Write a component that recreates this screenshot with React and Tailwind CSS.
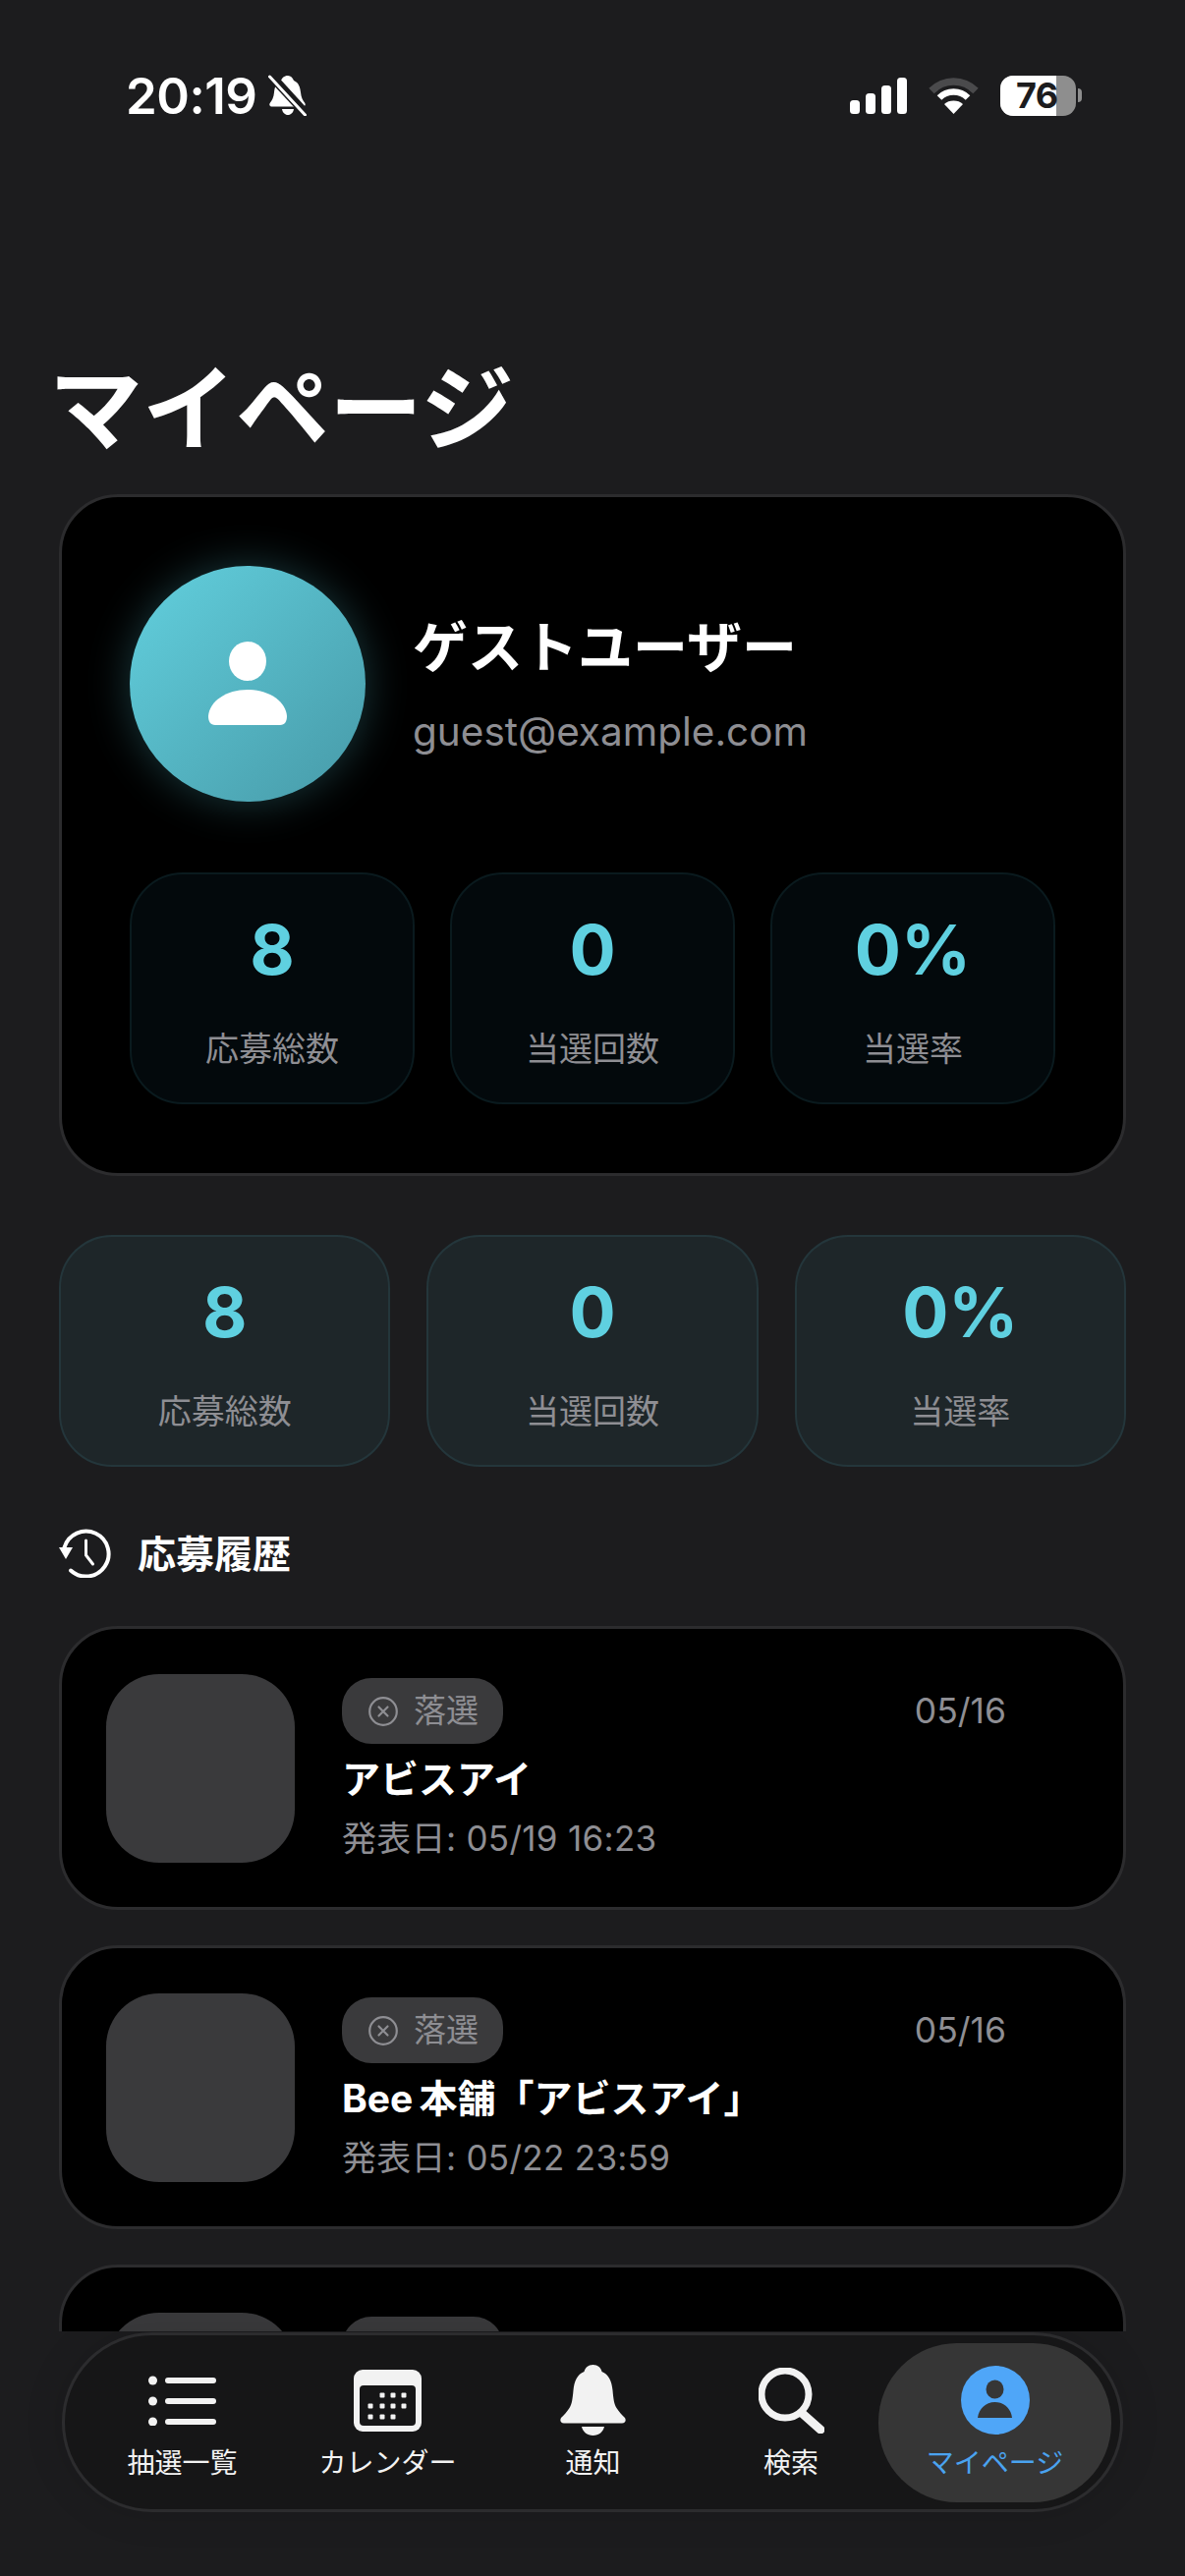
import React from 'react'

const STATS = [
  { value: '8', label: '応募総数' },
  { value: '0', label: '当選回数' },
  { value: '0%', label: '当選率' },
]

const HISTORY = [
  { title: 'アビスアイ', announce: '発表日: 05/19 16:23', date: '05/16' },
  { title: 'Bee\u2009本舗「アビスアイ」', announce: '発表日: 05/22 23:59', date: '05/16' },
  { title: 'アビスアイ', announce: '発表日: 05/23 12:00', date: '05/16' },
]

function StatusBar() {
  return (
    <div className="flex h-[194px] shrink-0 items-center justify-between pl-[128px] pr-[105px] text-white">
      <div className="flex items-center gap-[12px]">
        <span className="text-[51px] leading-none font-semibold tracking-[-0.5px]">20:19</span>
        <svg width="40" height="42" viewBox="0 0 40 42" fill="none">
          <path d="M20 1c3 0 5 2.500 6 5 5 2 6.500 7 7 12 .5 5 2 8 4 10.500 1.500 2 .5 4-2 4H4c-2.500 0-3.500-2-2-4 2-2.500 3.500-5.500 4-10.500.5-5 2-10 7-12 1-2.500 3-5 7-5z" fill="#fff" />
          <path d="M14 35h12c-.5 3.500-3 6-6 6s-5.500-2.500-6-6z" fill="#fff" />
          <path d="M2 1l36 39" stroke="#1c1c1e" strokeWidth="8" />
          <path d="M1.500 2l36 39" stroke="#fff" strokeWidth="3" strokeLinecap="round" />
          <path d="M8 1.500l32 35" stroke="#1c1c1e" strokeWidth="2" />
        </svg>
      </div>
      <div className="flex items-center">
        <svg width="58" height="37" viewBox="0 0 58 37" fill="#fff">
          <rect x="0" y="23" width="10" height="14" rx="3.500" />
          <rect x="16" y="16" width="10" height="21" rx="3.500" />
          <rect x="32" y="8" width="10" height="29" rx="3.500" />
          <rect x="48" y="0" width="10" height="37" rx="3.500" />
        </svg>
        <svg className="ml-[22px]" width="51" height="37" viewBox="0 0 51 37" fill="none">
          <path d="M3 13.500C9.500 7 17 4 25.500 4S41.500 7 48 13.500" stroke="#4a4a4c" strokeWidth="7.500" />
          <path d="M11 20.500c4-4 9-6 14.500-6s10.500 2 14.500 6" stroke="#fff" strokeWidth="6.500" />
          <path d="M25.500 37L16 27c2.500-2.500 5.800-3.500 9.500-3.500S32.500 24.500 35 27z" fill="#fff" />
        </svg>
        <div className="relative ml-[22px] flex h-[41px] w-[77px] items-center overflow-hidden rounded-[13px] bg-[#8e8e8e] pl-[16px]">
          <div className="absolute inset-y-0 left-0 w-[57px] bg-white" />
          <span className="relative text-[36px] leading-none font-bold tracking-[-0.5px] text-[#1c1c1e]">76</span>
        </div>
        <div className="ml-[2px] h-[14px] w-[4px] rounded-r-full bg-[#8e8e8e]" />
      </div>
    </div>
  )
}

function StatBox({ value, label, className }) {
  return (
    <div className={`flex h-[236px] flex-col items-center rounded-[54px] border-2 pt-[35px] ${className}`}>
      <span className="text-[70px] leading-[84px] font-bold text-[#5fd0e0]">{value}</span>
      <span className="mt-[35px] text-[34px] leading-[48px] text-[#8e8e93]">{label}</span>
    </div>
  )
}

function ProfileCard() {
  return (
    <div className="rounded-[60px] border-[3px] border-[#2c2c2e] bg-black px-[69px] pt-[70px] pb-[70px]">
      <div className="flex items-center">
        <div className="flex h-[240px] w-[240px] items-center justify-center rounded-full bg-gradient-to-br from-[#62d0de] to-[#479aa8] shadow-[0_0_44px_rgba(95,208,224,0.28)]">
          <svg width="80" height="86" viewBox="0 0 80 86" fill="#fff">
            <ellipse cx="40" cy="20" rx="19" ry="20" />
            <path d="M0 76C1 61 18 49 40 49s39 12 40 27c0 5-2 9-7 9H7c-5 0-7-4-7-9z" />
          </svg>
        </div>
        <div className="ml-[48px] flex flex-col">
          <span className="text-[56px] leading-[80px] font-bold text-white">ゲストユーザー</span>
          <span className="mt-[18px] text-[40.500px] leading-[56px] text-[#8e8e93]">guest@example.com</span>
        </div>
      </div>
      <div className="mt-[72px] grid grid-cols-3 gap-[36px]">
        {STATS.map(s => (
          <StatBox key={s.label} {...s} className="border-[#0a1a1e] bg-[#03090c]" />
        ))}
      </div>
    </div>
  )
}

function HistoryCard({ title, announce, date }) {
  return (
    <div className="flex h-[289px] shrink-0 items-start rounded-[60px] border-[3px] border-[#2c2c2e] bg-black pt-[46px] pl-[45px]">
      <div className="h-[192px] w-[192px] shrink-0 rounded-[54px] bg-[#3a3a3c]" />
      <div className="ml-[48px] flex w-[676px] flex-col pt-[4px]">
        <div className="flex items-center justify-between">
          <div className="flex h-[67px] items-center rounded-[30px] bg-[#3a3a3c] pl-[27px] pr-[25px]">
            <svg width="30" height="30" viewBox="0 0 30 30" fill="none" stroke="#8e8e93" strokeWidth="2.200" strokeLinecap="round">
              <circle cx="15" cy="15" r="13.800" />
              <path d="M10.500 10.500l9 9M19.500 10.500l-9 9" />
            </svg>
            <span className="ml-[16px] text-[33px] leading-none text-[#8e8e93]">落選</span>
          </div>
          <span className="text-[35.500px] leading-none text-[#8e8e93]">{date}</span>
        </div>
        <span className="mt-[8px] text-[39px] leading-[56px] font-bold text-white">{title}</span>
        <span className="mt-[7px] text-[35px] leading-[50px] tracking-[0.3px] text-[#8e8e93]">{announce}</span>
      </div>
    </div>
  )
}

function TabIcon({ name }) {
  if (name === 'list') {
    return (
      <svg width="69" height="51" viewBox="0 0 69 51" fill="#f2f2f2">
        <circle cx="4.500" cy="5" r="4.500" />
        <circle cx="4.500" cy="26" r="4.500" />
        <circle cx="4.500" cy="47" r="4.500" />
        <rect x="17" y="2" width="52" height="6" rx="3" />
        <rect x="17" y="23" width="52" height="6" rx="3" />
        <rect x="17" y="44" width="52" height="6" rx="3" />
      </svg>
    )
  }
  if (name === 'calendar') {
    const dots = [[29, 26], [40, 26], [51, 26], [17, 37], [29, 37], [40, 37], [51, 37], [17, 48], [29, 48], [40, 48]]
    return (
      <svg width="69" height="63" viewBox="0 0 69 63">
        <rect width="69" height="63" rx="9" fill="#f2f2f2" />
        <rect x="6" y="16" width="57" height="41" rx="4" fill="#161617" />
        {dots.map(([x, y]) => (
          <rect key={`${x}-${y}`} x={x - 2.5} y={y - 2.5} width="5" height="5" rx="1" fill="#f2f2f2" />
        ))}
      </svg>
    )
  }
  if (name === 'bell') {
    return (
      <svg width="67" height="72" viewBox="0 0 67 72" fill="#f2f2f2">
        <path d="M33.500 0c5 0 8 3 9 7 7 3 10 9 11 19 .8 9 1.500 14 4 18 2 3.500 5.500 7 8.500 10 1.500 2.500.5 5.500-3 5.500H4c-3.500 0-4.500-3-3-5.500 3-3 6.500-6.500 8.500-10 2.500-4 3.200-9 4-18 1-10 4-16 11-19 1-4 4-7 9-7z" />
        <path d="M22 63h23c-1 5-5.500 9-11.500 9S23 68 22 63z" />
      </svg>
    )
  }
  if (name === 'search') {
    return (
      <svg width="67" height="67" viewBox="0 0 67 67" fill="none" stroke="#f2f2f2" strokeLinecap="round">
        <circle cx="27" cy="27" r="24" strokeWidth="7" />
        <path d="M45 47l18 16" strokeWidth="9" />
      </svg>
    )
  }
  return (
    <svg width="70" height="70" viewBox="0 0 70 70">
      <circle cx="35" cy="35" r="35" fill="#4fa6f8" />
      <ellipse cx="34.500" cy="24" rx="9" ry="9.500" fill="#363636" />
      <path d="M17 53c1-9 8-16 17.500-16S51 44 52 53z" fill="#363636" />
    </svg>
  )
}

function TabItem({ icon, label, className = '', labelClass = 'text-[#f2f2f2]' }) {
  return (
    <div className={`flex flex-col items-center pt-[3px] ${className}`}>
      <div className="flex h-[72px] items-center justify-center">
        <TabIcon name={icon} />
      </div>
      <span className={`mt-[8px] text-[28px] leading-[40px] whitespace-nowrap ${labelClass}`}>{label}</span>
    </div>
  )
}

function TabBar() {
  return (
    <div className="flex flex-1 flex-col bg-[#1c1c1e] pt-[1px] pl-[63px]">
      <div className="flex h-[183px] w-[1080px] items-center rounded-[92px] border-[3px] border-[#2c2c2e] bg-[#161617] pl-[15px] shadow-[0_0_40px_rgba(0,0,0,0.12)]">
        <TabItem icon="list" label="抽選一覧" className="w-[209px]" />
        <TabItem icon="calendar" label="カレンダー" className="w-[209px]" />
        <TabItem icon="bell" label="通知" className="w-[209px]" />
        <TabItem icon="search" label="検索" className="ml-[8px] w-[178px]" />
        <TabItem
          icon="user"
          label="マイページ"
          className="h-[162px] w-[237px] justify-center rounded-[80px] bg-[#363636]"
          labelClass="text-[#4aa3f0]"
        />
      </div>
    </div>
  )
}

export default function App() {
  return (
    <div className="flex h-[2622px] w-[1206px] flex-col overflow-hidden bg-[#1c1c1e] font-['Inter','Noto_Sans_CJK_JP',sans-serif]">
      <div className="h-[2373px] shrink-0 overflow-hidden">
        <StatusBar />
        <h1 className="mt-[166px] mb-[29px] pl-[50px] text-[95px] leading-[114px] font-bold text-white">マイページ</h1>
        <div className="flex flex-col px-[60px]">
          <ProfileCard />
          <div className="mt-[60px] grid grid-cols-3 gap-[37px]">
            {STATS.map(s => (
              <StatBox key={s.label} {...s} className="border-[#24363b] bg-[#1e2629]" />
            ))}
          </div>
          <div className="mt-[62px] flex h-[52px] items-center">
            <svg width="54" height="50" viewBox="0 0 54 50" fill="none" stroke="#fff" strokeWidth="4" strokeLinecap="round">
              <path d="M5.500 19A23 23 0 1 1 12 42.500" />
              <path d="M0 19h14L7 31z" fill="#fff" stroke="none" />
              <path d="M27.500 12v15l7 9" strokeWidth="3" />
            </svg>
            <span className="ml-[26px] text-[39px] leading-none font-bold text-white">応募履歴</span>
          </div>
          <div className="mt-[48px] flex flex-col gap-[36px]">
            {HISTORY.map((h, i) => (
              <HistoryCard key={i} {...h} />
            ))}
          </div>
        </div>
      </div>
      <TabBar />
    </div>
  )
}
